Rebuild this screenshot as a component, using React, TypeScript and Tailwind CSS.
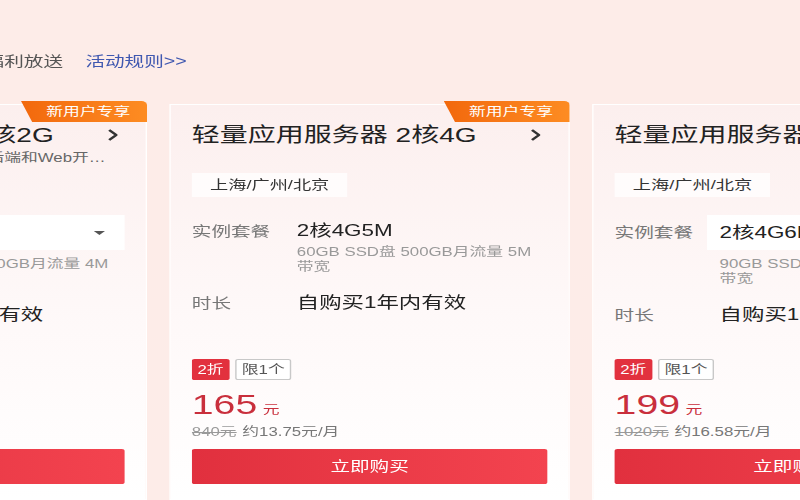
import React from "react";

const FONT = "font-['Liberation_Sans','Noto_Sans_CJK_SC',sans-serif]";

type CardProps = {
  title: string;
  subtitle?: string;
  region?: string;
  value: string;
  sub: string;
  select?: boolean;
  price: string;
  orig: string;
  monthly: string;
};

function Caret() {
  return (
    <svg width="8" height="4" viewBox="0 0 8 4" className="shrink-0">
      <polygon points="0,0 8,0 4,4" fill="#555" />
    </svg>
  );
}

function Card({ title, subtitle, region, value, sub, select, price, orig, monthly }: CardProps) {
  return (
    <div className="relative flex h-[396px] w-[286px] shrink-0 flex-col border border-white bg-linear-to-b from-[#fcefee] via-[#fef8f8] to-white px-[15px] pb-[15px] pt-[16px]">
      <div className="absolute -top-[4px] -right-px flex h-[21px] w-[90px] items-center justify-center rounded-tr-[4px] bg-linear-to-r from-[#f2680c] to-[#fd8c22] pl-[6px] text-[12px] text-white [clip-path:polygon(0_0,100%_0,100%_100%,8px_100%)]">
        新用户专享
      </div>
      <div className="flex h-[28px] items-center justify-between pr-[5px]">
        <span className="whitespace-nowrap text-[20px] leading-[28px] text-[#222]">{title}</span>
        <svg width="7" height="12" viewBox="0 0 7 12" className="shrink-0">
          <polyline points="1,1 6,6 1,11" fill="none" stroke="#333" strokeWidth="2" />
        </svg>
      </div>
      <div className="h-[48px]">
        {subtitle && (
          <div className="mt-[1px] w-[245px] truncate text-[12px] leading-[16px] text-[#666]">{subtitle}</div>
        )}
        {region && (
          <div className="mt-[24px] inline-flex h-[24px] items-center bg-white/75 px-[13px] text-[13px] text-[#333]">
            {region}
          </div>
        )}
      </div>
      <div className="mt-[18px] flex">
        <div
          className={
            select
              ? "h-[35px] w-[66px] shrink-0 text-[14px] leading-[35px] text-[#777]"
              : "mt-[5px] w-[66px] shrink-0 text-[14px] leading-[22px] text-[#777]"
          }
        >
          实例套餐
        </div>
        <div className="min-w-0 flex-1">
          {select ? (
            <div className="flex h-[35px] items-center justify-between bg-white pl-[9px] pr-[14px]">
              <span className="text-[16px] text-[#222]">{value}</span>
              <Caret />
            </div>
          ) : (
            <div className="mt-[5px] pl-[9px] text-[16px] leading-[22px] text-[#222]">{value}</div>
          )}
          <div className={(select ? "mt-[7px]" : "mt-[3px]") + " pl-[9px] text-[12px] leading-[15px] text-[#999]"}>{sub}</div>
        </div>
      </div>
      <div className="mt-[17px] flex">
        <div className="w-[66px] shrink-0 text-[14px] leading-[22px] text-[#777]">时长</div>
        <div className="pl-[9px] text-[16px] leading-[22px] text-[#222]">自购买1年内有效</div>
      </div>
      <div className="mt-auto flex flex-col">
        <div className="flex h-[21px] gap-[4px]">
          <span className="flex items-center rounded-[2px] bg-[#e2313e] px-[4px] text-[12px] text-white">2折</span>
          <span className="flex items-center rounded-[2px] border border-[#c8c8c8] bg-white px-[4px] text-[12px] text-[#555]">
            限1个
          </span>
        </div>
        <div className="mt-[11px] flex h-[28px] items-baseline leading-[28px]">
          <span className="text-[28px] leading-[28px] text-[#c92f3c]">{price}</span>
          <span className="ml-[4px] text-[12px] leading-[28px] text-[#c92f3c]">元</span>
        </div>
        <div className="mt-[5px] flex gap-[4px] text-[12px] leading-[16px]">
          <span className="text-[#999] line-through">{orig}</span>
          <span className="text-[#777]">{monthly}</span>
        </div>
        <button className="mt-[9px] h-[35px] w-full rounded-[2px] bg-linear-to-r from-[#e1303e] to-[#f3434f] text-[14px] text-white">
          立即购买
        </button>
      </div>
    </div>
  );
}

export default function App() {
  return (
    <div className={`h-[500px] w-[800px] overflow-hidden bg-[#fdece8] ${FONT}`}>
      <div className="w-[572px] origin-top-left scale-x-[1.4]">
        <div className="-ml-[39px] flex items-center gap-4 pt-[51px] text-[14px] leading-[20px]">
          <span className="whitespace-nowrap text-[#555]">限量福利放送</span>
          <span className="whitespace-nowrap text-[#4058b0]">活动规则&gt;&gt;</span>
        </div>
        <div className="-ml-[181px] mt-[33px] flex gap-4">
          <Card
            title="轻量应用服务器 2核2G"
            subtitle="适用于网站、小程序、电商、后端和Web开发等场景"
            value="2核2G4M"
            sub="40GB SSD盘 300GB月流量 4M 带宽"
            select
            price="99"
            orig="480元"
            monthly="约8.25元/月"
          />
          <Card
            title="轻量应用服务器 2核4G"
            region="上海/广州/北京"
            value="2核4G5M"
            sub="60GB SSD盘 500GB月流量 5M 带宽"
            price="165"
            orig="840元"
            monthly="约13.75元/月"
          />
          <Card
            title="轻量应用服务器 2核4G"
            region="上海/广州/北京"
            value="2核4G6M"
            sub="90GB SSD盘 800GB月流量 6M 带宽"
            select
            price="199"
            orig="1020元"
            monthly="约16.58元/月"
          />
        </div>
      </div>
    </div>
  );
}
